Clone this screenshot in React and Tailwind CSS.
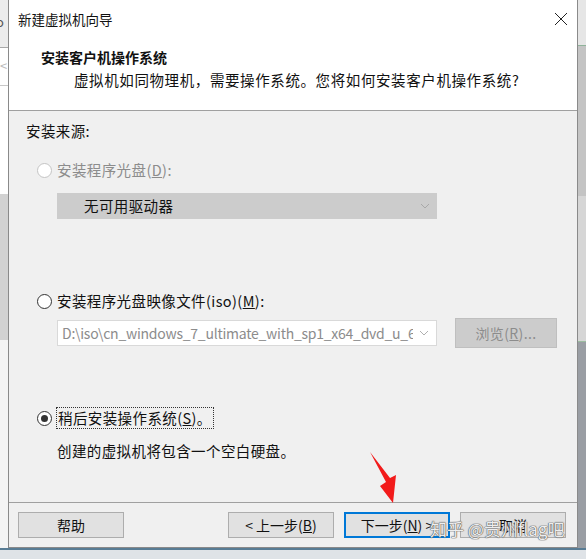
import React from 'react';

const font = { fontFamily: '"Noto Sans CJK SC", "Noto Sans", sans-serif' };

const Radio = ({ checked, disabled }) => (
  <span
    className={`w-[15px] h-[15px] rounded-full border flex items-center justify-center shrink-0 bg-white ${
      disabled ? 'border-[#c4c4c4]' : 'border-[#333333]'
    }`}
  >
    {checked && <span className="w-[7px] h-[7px] rounded-full bg-[#333333]" />}
  </span>
);

const Chevron = ({ color = '#9a9a9a' }) => (
  <svg width="10" height="6" viewBox="0 0 10 6" className="shrink-0">
    <polyline points="1,1 5,5 9,1" fill="none" stroke={color} strokeWidth="1" />
  </svg>
);

const Button = ({ children, primary }) => (
  <button
    className={`w-[106px] h-[26px] bg-[#e1e1e1] text-[14px] text-[#111] flex items-center justify-center ${
      primary ? 'border-2 border-[#0078d7]' : 'border border-[#adadad]'
    }`}
  >
    {children}
  </button>
);

const App = () => {
  return (
    <div className="w-[586px] h-[559px] relative overflow-hidden bg-[#dcdcdc]" style={font}>
      <div className="flex h-[548px]">
        {/* left strip: window behind */}
        <div className="w-[8px] flex flex-col">
          <div className="h-[48px] bg-[#ececec] border-b border-[#a8a8a8] text-[13px] text-[#555] pt-[12px] -ml-[4px]">o</div>
          <div className="h-[38px] bg-white border-b border-[#c8c8c8] text-[13px] text-[#bbb] pt-[8px]">&lt;</div>
          <div className="h-[108px] bg-white" />
          <div className="h-[146px] bg-[#d2d2d2]" />
          <div className="flex-1 bg-[#f4f4f4]" />
        </div>

        {/* dialog */}
        <div className="w-[570px] flex flex-col border-l border-r border-b border-[#8a8a8a] bg-white">
          <div className="h-[38px] flex items-center justify-between pl-[9px] pr-[8px]">
            <span className="text-[13.5px] text-[#111]">新建虚拟机向导</span>
            <svg width="14" height="14" viewBox="0 0 14 14" className="mr-[1px]">
              <path d="M1 1 L13 13 M13 1 L1 13" stroke="#222" strokeWidth="1" />
            </svg>
          </div>
          <div className="h-[72px] flex flex-col pl-[32px] pt-[8px]">
            <span className="text-[14px] font-bold text-[#111] leading-[22px]">安装客户机操作系统</span>
            <span className="text-[14.5px] text-[#111] ml-[33px] leading-[22px] tracking-[0.6px] mt-[1px]">
              虚拟机如同物理机，需要操作系统。您将如何安装客户机操作系统?
            </span>
          </div>
          <div className="flex-1 bg-[#f0f0f0] border-t border-[#a0a0a0] flex flex-col pl-[17px] text-[14.5px] tracking-[0.4px] relative">
            <div className="mt-[9px] h-[22px] leading-[22px] text-[#111]">安装来源:</div>

            <div className="mt-[18px] flex items-center gap-[5px] pl-[11px] h-[20px]">
              <Radio disabled />
              <span className="text-[#8c8c8c]">
                安装程序光盘(<u>D</u>):
              </span>
            </div>
            <div className="mt-[13px] ml-[31px] w-[380px] h-[26px] bg-[#cccccc] flex items-center justify-between pl-[27px] pr-[7px]">
              <span className="text-[#111]">无可用驱动器</span>
              <Chevron color="#a8a8a8" />
            </div>

            <div className="mt-[72px] flex items-center gap-[5px] pl-[11px] h-[20px]">
              <Radio />
              <span className="text-[#111]">
                安装程序光盘映像文件(iso)(<u>M</u>):
              </span>
            </div>
            <div className="mt-[7px] flex items-center">
              <div className="ml-[31px] w-[380px] h-[26px] bg-white border border-[#d9d9d9] flex items-center pl-[4px] pr-[7px] overflow-hidden">
                <span className="text-[#8c8c8c] text-[14px] whitespace-nowrap overflow-hidden w-[351px] tracking-[-0.25px]">
                  D:\iso\cn_windows_7_ultimate_with_sp1_x64_dvd_u_677408.iso
                </span>
                <span className="ml-auto">
                  <Chevron color="#b0b0b0" />
                </span>
              </div>
              <div className="ml-[18px] w-[102px] h-[30px] bg-[#cccccc] border border-[#bfbfbf] flex items-center justify-center text-[#8c8c8c] text-[14px]">
                浏览(<u>R</u>)...
              </div>
            </div>

            <div className="mt-[59px] flex items-center gap-[4px] pl-[11px] h-[22px]">
              <Radio checked />
              <span className="text-[#111] border border-dotted border-[#333] px-[1px] leading-[20px]">
                稍后安装操作系统(<u>S</u>)。
              </span>
            </div>
            <div className="mt-[11px] ml-[31px] text-[#111] leading-[22px]">创建的虚拟机将包含一个空白硬盘。</div>
          </div>
          <div className="h-[45px] bg-[#f0f0f0] border-t border-[#a0a0a0] flex items-center pl-[9px] pr-[11px]">
            <Button>帮助</Button>
            <div className="ml-auto flex gap-[10px]">
              <Button>
                &lt; 上一步(<u>B</u>)
              </Button>
              <Button primary>
                下一步(<u>N</u>) &gt;
              </Button>
              <Button>取消</Button>
            </div>
          </div>
        </div>

        {/* right strip */}
        <div className="w-[8px] flex flex-col">
          <div className="h-[46px] bg-[#e6e6e6] border-b border-[#8fb39a]" />
          <div className="h-[150px] bg-[#c4c4c4]" />
          <div className="h-[146px] bg-[#d6d6d6] border-b border-[#9bbd9f]" />
          <div className="flex-1 bg-[#9a9ea4]" />
        </div>
      </div>
      <div className="h-[11px] bg-[#dfe3e7] border-t-2 border-[#587c94]" />

      {/* red arrow annotation */}
      <svg className="absolute left-0 top-0 pointer-events-none" width="586" height="559">
        <polygon points="370,452 386,482 380,486 393,503 396,475 390,478" fill="#f21b1b" />
      </svg>

      {/* watermark */}
      <div
        className="absolute left-[430px] top-[516px] text-[17px] text-white/90 whitespace-nowrap pointer-events-none"
        style={{ textShadow: '0 0 1px #555, 0 0 1px #555, 0 0 1px #555' }}
      >
        知乎 @贵州flag吧
      </div>
    </div>
  );
};

export default App;
